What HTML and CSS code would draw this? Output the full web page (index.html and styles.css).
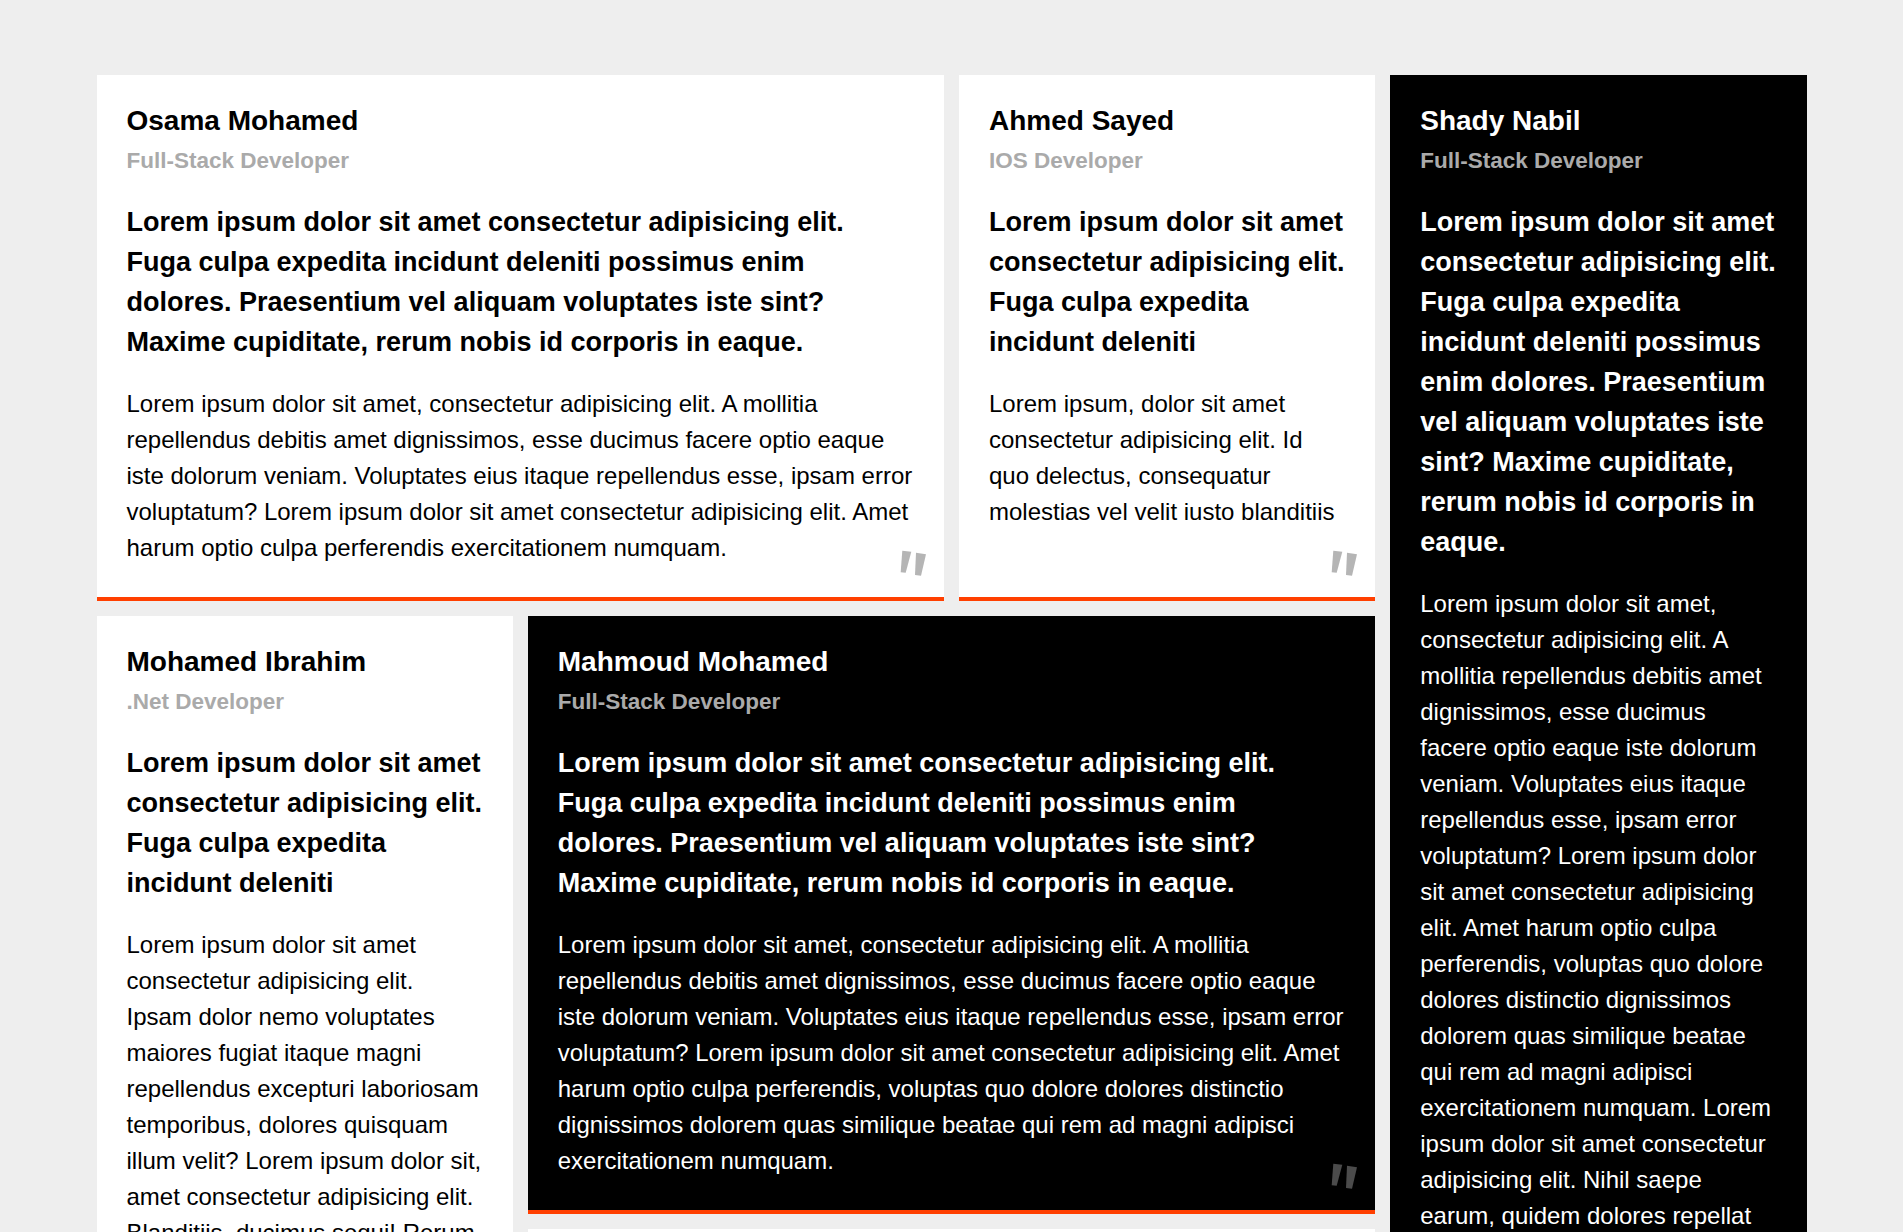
FILE: index.html
```html
<!DOCTYPE html>
<html lang="en">
<head>
<meta charset="utf-8">
<title>Testimonials</title>
<link rel="stylesheet" href="styles.css">
</head>
<body>
<section class="wall">
  <div class="main">
    <div class="row">
      <article class="card light wide">
        <h3 class="name">Osama Mohamed</h3>
        <p class="job">Full-Stack Developer</p>
        <p class="lead">Lorem ipsum dolor sit amet consectetur adipisicing elit. Fuga culpa expedita incidunt deleniti possimus enim dolores. Praesentium vel aliquam voluptates iste sint? Maxime cupiditate, rerum nobis id corporis in eaque.</p>
        <p class="text">Lorem ipsum dolor sit amet, consectetur adipisicing elit. A mollitia repellendus debitis amet dignissimos, esse ducimus facere optio eaque iste dolorum veniam. Voluptates eius itaque repellendus esse, ipsam error voluptatum? Lorem ipsum dolor sit amet consectetur adipisicing elit. Amet harum optio culpa perferendis exercitationem numquam.</p>
        <svg class="quote" viewBox="0 0 27 26" aria-hidden="true"><polygon points="2.3,0.7 11.3,1.7 5.7,22.7 0.7,22.3"/><polygon points="16,2.7 26,4.3 21,25.7 15,25"/></svg>
      </article>
      <article class="card light">
        <h3 class="name">Ahmed Sayed</h3>
        <p class="job">IOS Developer</p>
        <p class="lead">Lorem ipsum dolor sit amet consectetur adipisicing elit. Fuga culpa expedita incidunt deleniti</p>
        <p class="text">Lorem ipsum, dolor sit amet consectetur adipisicing elit. Id quo delectus, consequatur molestias vel velit iusto blanditiis</p>
        <svg class="quote" viewBox="0 0 27 26" aria-hidden="true"><polygon points="2.3,0.7 11.3,1.7 5.7,22.7 0.7,22.3"/><polygon points="16,2.7 26,4.3 21,25.7 15,25"/></svg>
      </article>
    </div>
    <div class="row row-top">
      <article class="card light">
        <h3 class="name">Mohamed Ibrahim</h3>
        <p class="job">.Net Developer</p>
        <p class="lead">Lorem ipsum dolor sit amet consectetur adipisicing elit. Fuga culpa expedita incidunt deleniti</p>
        <p class="text">Lorem ipsum dolor sit amet consectetur adipisicing elit. Ipsam dolor nemo voluptates maiores fugiat itaque magni repellendus excepturi laboriosam temporibus, dolores quisquam illum velit? Lorem ipsum dolor sit, amet consectetur adipisicing elit. Blanditiis, ducimus sequi! Rerum nesciunt quibusdam cumque, officiis nostrum iure modi tempora laudantium.</p>
        <svg class="quote" viewBox="0 0 27 26" aria-hidden="true"><polygon points="2.3,0.7 11.3,1.7 5.7,22.7 0.7,22.3"/><polygon points="16,2.7 26,4.3 21,25.7 15,25"/></svg>
      </article>
      <div class="stack">
        <article class="card dark">
          <h3 class="name">Mahmoud Mohamed</h3>
          <p class="job">Full-Stack Developer</p>
          <p class="lead">Lorem ipsum dolor sit amet consectetur adipisicing elit. Fuga culpa expedita incidunt deleniti possimus enim dolores. Praesentium vel aliquam voluptates iste sint? Maxime cupiditate, rerum nobis id corporis in eaque.</p>
          <p class="text">Lorem ipsum dolor sit amet, consectetur adipisicing elit. A mollitia repellendus debitis amet dignissimos, esse ducimus facere optio eaque iste dolorum veniam. Voluptates eius itaque repellendus esse, ipsam error voluptatum? Lorem ipsum dolor sit amet consectetur adipisicing elit. Amet harum optio culpa perferendis, voluptas quo dolore dolores distinctio dignissimos dolorem quas similique beatae qui rem ad magni adipisci exercitationem numquam.</p>
          <svg class="quote" viewBox="0 0 27 26" aria-hidden="true"><polygon points="2.3,0.7 11.3,1.7 5.7,22.7 0.7,22.3"/><polygon points="16,2.7 26,4.3 21,25.7 15,25"/></svg>
        </article>
        <article class="card light">
          <h3 class="name">Ahmed Ali</h3>
          <p class="job">Front-End Developer</p>
          <p class="lead">Lorem ipsum dolor sit amet consectetur adipisicing elit. Fuga culpa expedita incidunt deleniti possimus enim dolores.</p>
          <p class="text">Lorem ipsum dolor sit amet, consectetur adipisicing elit. A mollitia repellendus debitis amet dignissimos, esse ducimus facere optio eaque iste dolorum veniam.</p>
          <svg class="quote" viewBox="0 0 27 26" aria-hidden="true"><polygon points="2.3,0.7 11.3,1.7 5.7,22.7 0.7,22.3"/><polygon points="16,2.7 26,4.3 21,25.7 15,25"/></svg>
        </article>
      </div>
    </div>
  </div>
  <article class="card dark side">
    <h3 class="name">Shady Nabil</h3>
    <p class="job">Full-Stack Developer</p>
    <p class="lead">Lorem ipsum dolor sit amet consectetur adipisicing elit. Fuga culpa expedita incidunt deleniti possimus enim dolores. Praesentium vel aliquam voluptates iste sint? Maxime cupiditate, rerum nobis id corporis in eaque.</p>
    <p class="text">Lorem ipsum dolor sit amet, consectetur adipisicing elit. A mollitia repellendus debitis amet dignissimos, esse ducimus facere optio eaque iste dolorum veniam. Voluptates eius itaque repellendus esse, ipsam error voluptatum? Lorem ipsum dolor sit amet consectetur adipisicing elit. Amet harum optio culpa perferendis, voluptas quo dolore dolores distinctio dignissimos dolorem quas similique beatae qui rem ad magni adipisci exercitationem numquam. Lorem ipsum dolor sit amet consectetur adipisicing elit. Nihil saepe earum, quidem dolores repellat expedita voluptatum rem nesciunt. Quam, vero.</p>
    <svg class="quote" viewBox="0 0 27 26" aria-hidden="true"><polygon points="2.3,0.7 11.3,1.7 5.7,22.7 0.7,22.3"/><polygon points="16,2.7 26,4.3 21,25.7 15,25"/></svg>
  </article>
</section>
</body>
</html>
```

FILE: styles.css
```css
* {
  box-sizing: border-box;
}

html,
body {
  margin: 0;
  padding: 0;
}

body {
  background: #eeeeee;
  font-family: "Liberation Sans", Arial, sans-serif;
  color: #000;
}

.wall {
  width: 1710px;
  margin: 75px auto 0;
  display: grid;
  grid-template-columns: repeat(4, 1fr);
  gap: 15px;
  align-items: start;
}

.main {
  grid-column: 1 / 4;
  display: flex;
  flex-direction: column;
  gap: 15px;
}

.row {
  display: grid;
  grid-template-columns: repeat(3, 1fr);
  gap: 15px;
}

.row-top {
  align-items: start;
}

.stack {
  grid-column: span 2;
  display: flex;
  flex-direction: column;
  gap: 15px;
}

.wide {
  grid-column: span 2;
}

.side {
  grid-column: 4;
}

.card {
  position: relative;
  padding: 30px 30px 31px;
  border-bottom: 4px solid #ff3f00;
}

.light {
  background: #ffffff;
  color: #000;
}

.dark {
  background: #000000;
  color: #ffffff;
}

.name {
  margin: 0 0 11px;
  font-size: 28px;
  line-height: 32px;
  font-weight: 700;
}

.job {
  margin: 0;
  font-size: 22.5px;
  line-height: 25px;
  font-weight: 700;
  color: #aaaaaa;
}

.lead {
  margin: 29px 0 24px;
  font-size: 27px;
  line-height: 40px;
  font-weight: 700;
}

.text {
  margin: 0;
  font-size: 24px;
  line-height: 36px;
}

.quote {
  position: absolute;
  right: 17px;
  bottom: 21px;
  width: 27px;
  height: 26px;
  fill: #b5b5b5;
}

.dark .quote {
  fill: #4b4b4b;
}
```
